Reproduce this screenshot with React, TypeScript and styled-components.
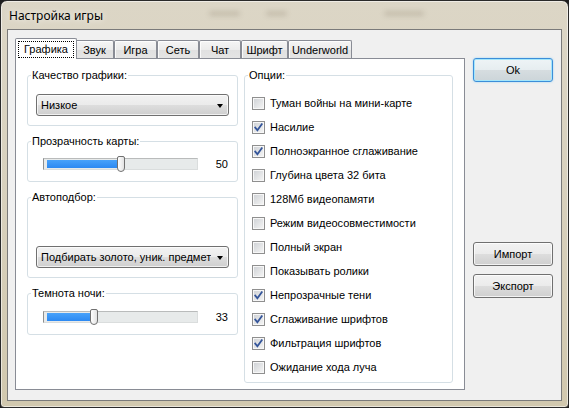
import React from 'react';
import styled, { createGlobalStyle, css } from 'styled-components';

// ── Global ────────────────────────────────────────────────────────────────

const GlobalStyle = createGlobalStyle`
  html, body {
    margin: 0;
    padding: 0;
    width: 569px;
    height: 408px;
    overflow: hidden;
    background: #1e1e1e;
  }
  body {
    font-family: "Liberation Sans", Arial, sans-serif;
    font-size: 11px;
    color: #000;
  }
  * { box-sizing: border-box; }
`;

// ── Window frame ──────────────────────────────────────────────────────────

const Window = styled.div`
  width: 569px;
  height: 408px;
  display: flex;
  flex-direction: column;
  border: 1px solid #2a2a2a;
  border-radius: 7px 7px 4px 4px;
  background: linear-gradient(180deg, #dcd6c6 0%, #d8d1be 45%, #d1c8ae 100%);
  box-shadow: inset 0 0 0 1px rgba(255, 255, 255, 0.55);
  padding: 0 6px 6px 6px;
  overflow: hidden;
`;

const TitleBar = styled.div`
  height: 28px;
  flex: none;
  display: flex;
  align-items: center;
  padding-left: 2px;
`;

const Title = styled.span`
  font-family: "Noto Sans", "Open Sans", sans-serif;
  font-size: 12px;
  color: #000;
  text-shadow: 0 0 6px rgba(255, 255, 255, 0.9);
`;

const Ghost = styled.span<{ $w: number; $ml: number }>`
  width: ${({ $w }) => $w}px;
  margin-left: ${({ $ml }) => $ml}px;
  height: 5px;
  margin-top: -4px;
  border-radius: 3px;
  background: rgba(95, 85, 62, 0.18);
  filter: blur(2.5px);
`;

const Client = styled.div`
  flex: 1;
  display: flex;
  border: 1px solid #7a7a7a;
  background: #f0f0f0;
  padding: 8px 0 0 7px;
`;

// ── Tabs ──────────────────────────────────────────────────────────────────

const TabArea = styled.div`
  width: 450px;
  display: flex;
  flex-direction: column;
`;

const TabStrip = styled.div`
  height: 20px;
  display: flex;
  align-items: flex-end;
  padding-left: 2px;
`;

const Tab = styled.div<{ $w: number; $active?: boolean }>`
  width: ${({ $w }) => $w}px;
  height: 18px;
  flex: none;
  display: flex;
  align-items: center;
  justify-content: center;
  border: 1px solid #898c95;
  border-bottom: none;
  border-radius: 2px 2px 0 0;
  background: linear-gradient(180deg, #f5f5f5 0%, #ececec 50%, #e0e0e0 51%, #e4e4e4 100%);
  box-shadow: inset 1px 1px 0 rgba(255, 255, 255, 0.8);
  white-space: nowrap;

  ${({ $active, $w }) =>
    $active &&
    css`
      width: ${$w + 4}px;
      height: 21px;
      margin: 0 -2px -1px -2px;
      background: #fff;
      box-shadow: none;
      position: relative;
      z-index: 1;
      padding-top: 1px;
    `}
`;

const FocusBox = styled.span`
  border: 1px dotted #000;
  padding: 1px 5px;
  line-height: 13px;
`;

const TabPage = styled.div`
  height: 332px;
  border: 1px solid #898c95;
  background: #fff;
  display: flex;
  gap: 6px;
  padding: 16px 11px 0 11px;
`;

// ── Groups ────────────────────────────────────────────────────────────────

const LeftCol = styled.div`
  width: 211px;
  display: flex;
  flex-direction: column;
  gap: 15px;
`;

const RightCol = styled.div`
  width: 209px;
  display: flex;
  flex-direction: column;
`;

const Group = styled.div<{ $h: number }>`
  height: ${({ $h }) => $h}px;
  flex: none;
  border: 1px solid #d5dfe5;
  border-radius: 3px;
  display: flex;
  flex-direction: column;
  padding-bottom: 9px;
`;

const Legend = styled.span`
  align-self: flex-start;
  margin: -7px 0 0 3px;
  padding: 0 1px;
  line-height: 13px;
  background: #fff;
`;

// ── Combo box ─────────────────────────────────────────────────────────────

const Select = styled.div`
  margin: auto 0 0 8px;
  width: 193px;
  height: 22px;
  flex: none;
  display: flex;
  align-items: center;
  border: 1px solid #707070;
  border-radius: 3px;
  background: linear-gradient(180deg, #f2f2f2 0%, #ebebeb 50%, #dddddd 51%, #cfcfcf 100%);
  box-shadow: inset 0 0 0 1px rgba(255, 255, 255, 0.7);
  padding-left: 4px;
`;

const SelectText = styled.span`
  flex: 1;
  overflow: hidden;
  white-space: nowrap;
`;

const Arrow = styled.span`
  width: 0;
  height: 0;
  flex: none;
  margin: 1px 5px 0 6px;
  border-left: 3.5px solid transparent;
  border-right: 3.5px solid transparent;
  border-top: 4px solid #000;
`;

// ── Slider ────────────────────────────────────────────────────────────────

const SliderRow = styled.div`
  margin-top: auto;
  height: 16px;
  display: flex;
  align-items: center;
  padding: 0 9px 0 15px;
`;

const Track = styled.div`
  position: relative;
  width: 155px;
  height: 12px;
  flex: none;
  background: #e7eaea;
  border: 1px solid #dadddd;
  border-left-color: #8e8f8f;
  border-top-color: #b9bbbb;
`;

const Fill = styled.div`
  position: absolute;
  left: 3px;
  top: 1px;
  bottom: 1px;
  background: linear-gradient(180deg, #48a2fa 0%, #2c89f2 100%);
`;

const Thumb = styled.div`
  position: absolute;
  top: -3px;
  width: 8px;
  height: 16px;
  margin-left: -4px;
  border: 1px solid #707070;
  border-radius: 2px 2px 4px 4px;
  background: linear-gradient(90deg, #ffffff 0%, #e2e2e2 100%);
`;

const SliderValue = styled.span`
  flex: 1;
  text-align: right;
`;

// ── Checkboxes ────────────────────────────────────────────────────────────

const OptionList = styled.div`
  margin-top: 9px;
  padding-left: 7px;
  display: flex;
  flex-direction: column;
`;

const OptionRow = styled.label`
  height: 24px;
  display: flex;
  align-items: center;
  gap: 5px;
  white-space: nowrap;
`;

const CheckBox = styled.span`
  width: 13px;
  height: 13px;
  flex: none;
  display: flex;
  align-items: center;
  justify-content: center;
  border: 1px solid #8f8f8f;
  background: linear-gradient(135deg, #cdd0d4 0%, #f6f6f6 100%);
  box-shadow: inset 0 0 0 1px #f7f7f7;
`;

// ── Buttons ───────────────────────────────────────────────────────────────

const ButtonCol = styled.div`
  width: 80px;
  margin-left: 8px;
  display: flex;
  flex-direction: column;
  padding-top: 20px;
`;

const ButtonGroup = styled.div`
  margin-top: 160px;
  display: flex;
  flex-direction: column;
  gap: 8px;
`;

const Button = styled.div<{ $default?: boolean }>`
  height: 24px;
  display: flex;
  align-items: center;
  justify-content: center;
  border: 1px solid #707070;
  border-radius: 3px;
  background: linear-gradient(180deg, #f2f2f2 0%, #ebebeb 50%, #dddddd 51%, #cfcfcf 100%);
  box-shadow: inset 0 0 0 1px rgba(255, 255, 255, 0.75);

  ${({ $default }) =>
    $default &&
    css`
      border-color: #3c8ed9;
      background: linear-gradient(180deg, #eef4f6 0%, #e6edf0 50%, #d6dde0 51%, #ccd5d9 100%);
      box-shadow: inset 0 0 0 1px #a4e6fb, 0 0 2px rgba(80, 190, 250, 0.6);
    `}
`;

// ── Data ──────────────────────────────────────────────────────────────────

const TABS = [
  { label: 'Графика', w: 58 },
  { label: 'Звук', w: 39 },
  { label: 'Игра', w: 43 },
  { label: 'Сеть', w: 42 },
  { label: 'Чат', w: 42 },
  { label: 'Шрифт', w: 47 },
  { label: 'Underworld', w: 64 },
];

const OPTIONS: [string, boolean][] = [
  ['Туман войны на мини-карте', false],
  ['Насилие', true],
  ['Полноэкранное сглаживание', true],
  ['Глубина цвета 32 бита', false],
  ['128Мб видеопамяти', false],
  ['Режим видеосовместимости', false],
  ['Полный экран', false],
  ['Показывать ролики', false],
  ['Непрозрачные тени', true],
  ['Сглаживание шрифтов', true],
  ['Фильтрация шрифтов', true],
  ['Ожидание хода луча', false],
];

const Check: React.FC = () => (
  <svg width="9" height="9" viewBox="0 0 9 9">
    <path d="M1.2 4.6 L3.4 7.2 L7.8 1.2" fill="none" stroke="#34559a" strokeWidth="1.8" strokeLinecap="square" />
  </svg>
);

const Slider: React.FC<{ value: number }> = ({ value }) => (
  <SliderRow>
    <Track>
      <Fill style={{ width: `calc(${value}% - 3px)` }} />
      <Thumb style={{ left: `${value}%` }} />
    </Track>
    <SliderValue>{value}</SliderValue>
  </SliderRow>
);

// ── App ───────────────────────────────────────────────────────────────────

const App: React.FC = () => (
  <>
    <GlobalStyle />
    <Window>
      <TitleBar>
        <Title>Настройка игры</Title>
        <Ghost $w={31} $ml={106} />
        <Ghost $w={21} $ml={26} />
        <Ghost $w={40} $ml={97} />
      </TitleBar>
      <Client>
        <TabArea>
          <TabStrip>
            {TABS.map((t, i) => (
              <Tab key={t.label} $w={t.w} $active={i === 0}>
                {i === 0 ? <FocusBox>{t.label}</FocusBox> : t.label}
              </Tab>
            ))}
          </TabStrip>
          <TabPage>
            <LeftCol>
              <Group $h={51}>
                <Legend>Качество графики:</Legend>
                <Select>
                  <SelectText>Низкое</SelectText>
                  <Arrow />
                </Select>
              </Group>
              <Group $h={41}>
                <Legend>Прозрачность карты:</Legend>
                <Slider value={50} />
              </Group>
              <Group $h={81}>
                <Legend>Автоподбор:</Legend>
                <Select>
                  <SelectText>Подбирать золото, уник. предмет</SelectText>
                  <Arrow />
                </Select>
              </Group>
              <Group $h={42}>
                <Legend>Темнота ночи:</Legend>
                <Slider value={33} />
              </Group>
            </LeftCol>
            <RightCol>
              <Group $h={308}>
                <Legend>Опции:</Legend>
                <OptionList>
                  {OPTIONS.map(([label, checked]) => (
                    <OptionRow key={label}>
                      <CheckBox>{checked && <Check />}</CheckBox>
                      {label}
                    </OptionRow>
                  ))}
                </OptionList>
              </Group>
            </RightCol>
          </TabPage>
        </TabArea>
        <ButtonCol>
          <Button $default>Ok</Button>
          <ButtonGroup>
            <Button>Импорт</Button>
            <Button>Экспорт</Button>
          </ButtonGroup>
        </ButtonCol>
      </Client>
    </Window>
  </>
);

export default App;
